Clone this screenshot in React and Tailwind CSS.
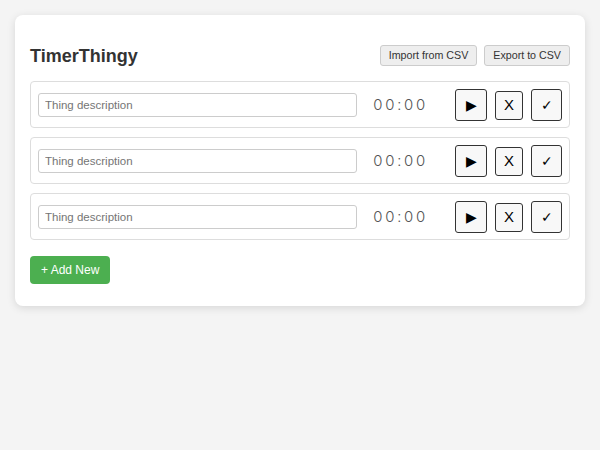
import { useState } from 'react';

const font = { fontFamily: '"Liberation Sans", Arial, sans-serif' };

function TimerRow() {
  return (
    <div className="flex items-center rounded-[4px] border border-[#dddddd] px-[7px] pb-[6px] pt-[7px]">
      <input
        type="text"
        placeholder="Thing description"
        className="h-[24px] w-[319px] rounded-[3px] border border-[#cccccc] bg-white px-[6px] text-[11.5px] text-[#333] outline-none placeholder:text-[#757575]"
      />
      <div className="ml-[16px] w-[82px] font-['Inter',sans-serif] text-[15px] font-light tabular-nums tracking-[2.4px] text-[#555]">
        00:00
      </div>
      <div className="flex items-center gap-[8px]">
        <button className="flex h-[32px] w-[32px] items-center justify-center rounded-[3px] border border-[#333] bg-[#f8f8f8] text-[14px] text-black">
          ▶
        </button>
        <button className="flex h-[29px] w-[28px] items-center justify-center rounded-[3px] border border-[#333] bg-[#f8f8f8] text-[15px] text-black">
          X
        </button>
        <button className="flex h-[32px] w-[31px] items-center justify-center rounded-[3px] border border-[#333] bg-[#f8f8f8] text-[14px] text-black">
          ✓
        </button>
      </div>
    </div>
  );
}

export default function App() {
  const [rows] = useState([1, 2, 3]);

  return (
    <div className="min-h-[450px] bg-[#f4f4f4] p-[15px]" style={font}>
      <div className="rounded-[8px] bg-white px-[15px] pb-[22px] pt-[30px] shadow-[0_2px_8px_rgba(0,0,0,0.12)]">
        <div className="mb-[15px] flex h-[21px] items-center justify-between">
          <h1 className="text-[18px] font-bold leading-none text-[#333]">TimerThingy</h1>
          <div className="flex gap-[7px]">
            <button className="h-[21px] rounded-[3px] border border-[#cccccc] bg-[#eeeeee] px-[8px] text-[10.7px] text-[#333]">
              Import from CSV
            </button>
            <button className="h-[21px] rounded-[3px] border border-[#cccccc] bg-[#eeeeee] px-[8px] text-[10.7px] text-[#333]">
              Export to CSV
            </button>
          </div>
        </div>
        <div className="flex flex-col gap-[9px]">
          {rows.map(r => <TimerRow key={r} />)}
        </div>
        <button className="mt-[16px] h-[28px] rounded-[4px] bg-[#4caf50] px-[11px] text-[12px] text-white">
          + Add New
        </button>
      </div>
    </div>
  );
}
